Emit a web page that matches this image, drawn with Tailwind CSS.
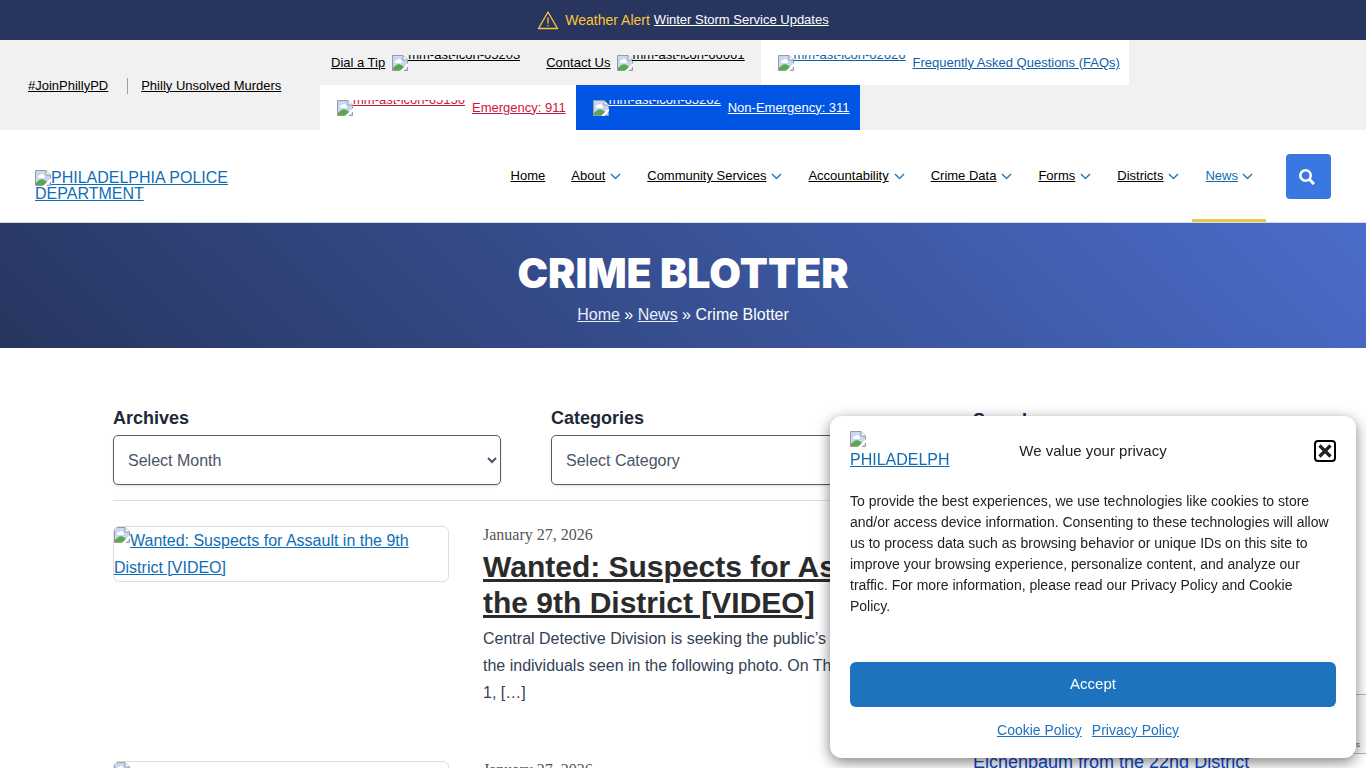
<!DOCTYPE html>
<html lang="en">
<head>
  <meta charset="UTF-8">
  <meta name="viewport" content="width=device-width, initial-scale=1.0">
  <title>Crime Blotter | Philadelphia Police Department</title>
  <script src="https://cdn.jsdelivr.net/npm/@tailwindcss/browser@4"></script>
</head>
<body class="bg-white h-screen overflow-hidden font-['Liberation_Sans',Arial,sans-serif] text-base text-[#334155]">

  <!-- Shared icons -->
  <svg class="hidden">
    <symbol id="missing" viewBox="0 0 16 16">
      <path d="M.5 .5H11L15.500 5V15.500H.5Z" fill="#c6d8f4"/>
      <path d="M3 7.500a2 2 0 0 1 2-2.500 2.500 2.500 0 0 1 4.500 1 1.500 1.500 0 0 1 0 2H4Z" fill="#fff"/>
      <path d="M1 15.500V13Q5 8 8.500 9.500T13 13V15.500Z" fill="#5aa84b"/>
      <path d="M8 16 16 8V11L11.500 16Z" fill="#fff"/>
      <path d="M7.500 15.500H.5V.5H11L15.500 5V8.500M12 15.500H15.500V12" fill="none" stroke="#9a9a9f"/>
      <path d="M11 .5V5H15.500" fill="#fff" stroke="#9a9a9f"/>
    </symbol>
    <symbol id="chevron" viewBox="0 0 11 7">
      <path d="M1 1 5.500 5.500 10 1" fill="none" stroke="currentColor" stroke-width="1.500"/>
    </symbol>
  </svg>

  <!-- Weather alert -->
  <div class="bg-[#27355f] h-10 flex items-center justify-center text-sm">
    <svg class="w-[22px] h-5 mr-1.5" viewBox="0 0 22 20" fill="none" stroke="#fcc63a" stroke-width="1.300" stroke-linejoin="round" stroke-linecap="round">
      <path d="M11 2 20.500 18.500H1.500Z"/>
      <path d="M11 8V13M11 15.300V15.800"/>
    </svg>
    <span class="text-[#fcc63a] mr-1">Weather Alert</span>
    <a href="#" class="text-white text-[13px] underline">Winter Storm Service Updates</a>
  </div>

  <!-- Top bar -->
  <div class="bg-[#f1f1f1] flex items-center text-[13px] text-black">
    <div class="w-80 shrink-0 flex items-center pl-7 pt-px">
      <a href="#" class="underline">#JoinPhillyPD</a>
      <span class="w-px h-4 bg-gray-400 ml-[19px] mr-[13px]"></span>
      <a href="#" class="underline">Philly Unsolved Murders</a>
    </div>
    <div class="w-[860px] flex flex-wrap">
      <a href="#" class="h-[45px] pl-[11px] pr-4 flex items-center gap-[7px] underline">Dial a Tip
        <span class="w-32 h-4 flex items-start overflow-hidden leading-0 whitespace-nowrap"><svg class="size-4 shrink-0"><use href="#missing"/></svg><span class="underline">mm-ast-icon-65203</span></span>
      </a>
      <a href="#" class="h-[45px] pl-2.5 pr-4 flex items-center gap-1.5 underline">Contact Us
        <span class="w-32 h-4 flex items-start overflow-hidden leading-0 whitespace-nowrap"><svg class="size-4 shrink-0"><use href="#missing"/></svg><span class="underline">mm-ast-icon-66661</span></span>
      </a>
      <a href="#" class="h-[45px] pl-[17px] pr-[9px] mr-12 flex items-center gap-[7px] underline bg-white text-[#0f5fa8]">
        <span class="w-32 h-4 flex items-start overflow-hidden leading-0 whitespace-nowrap"><svg class="size-4 shrink-0"><use href="#missing"/></svg><span class="underline">mm-ast-icon-62626</span></span>
        Frequently Asked Questions (FAQs)
      </a>
      <a href="#" class="h-[45px] pl-[17px] pr-2.5 flex items-center gap-[7px] underline bg-white text-[#c8193c]">
        <span class="w-32 h-4 flex items-start overflow-hidden leading-0 whitespace-nowrap"><svg class="size-4 shrink-0"><use href="#missing"/></svg><span class="underline">mm-ast-icon-65156</span></span>
        Emergency: 911
      </a>
      <a href="#" class="h-[45px] pl-[17px] pr-2.5 flex items-center gap-[7px] underline bg-[#0055e5] text-white">
        <span class="w-32 h-4 flex items-start overflow-hidden leading-0 whitespace-nowrap"><svg class="size-4 shrink-0"><use href="#missing"/></svg><span class="underline">mm-ast-icon-65262</span></span>
        Non-Emergency: 311
      </a>
    </div>
  </div>

  <!-- Main header -->
  <header class="h-[93px] border-b border-[#d5dbea] px-[35px] flex items-center justify-between">
    <a href="#" class="w-[200px] mt-[19px] leading-4 text-[#0f6db5] underline"><svg class="size-4 inline-block align-bottom"><use href="#missing"/></svg>PHILADELPHIA POLICE DEPARTMENT</a>
    <div class="h-full flex items-center">
      <nav class="h-full flex text-[13px] text-black whitespace-nowrap">
        <a href="#" class="px-[13px] flex items-center"><span class="underline">Home</span></a>
        <a href="#" class="px-[13px] flex items-center gap-[5px]"><span class="underline">About</span><svg class="w-[11px] h-[7px] text-[#2b7fb0]"><use href="#chevron"/></svg></a>
        <a href="#" class="px-[13px] flex items-center gap-[5px]"><span class="underline">Community Services</span><svg class="w-[11px] h-[7px] text-[#2b7fb0]"><use href="#chevron"/></svg></a>
        <a href="#" class="px-[13px] flex items-center gap-[5px]"><span class="underline">Accountability</span><svg class="w-[11px] h-[7px] text-[#2b7fb0]"><use href="#chevron"/></svg></a>
        <a href="#" class="px-[13px] flex items-center gap-[5px]"><span class="underline">Crime Data</span><svg class="w-[11px] h-[7px] text-[#2b7fb0]"><use href="#chevron"/></svg></a>
        <a href="#" class="px-[13px] flex items-center gap-[5px]"><span class="underline">Forms</span><svg class="w-[11px] h-[7px] text-[#2b7fb0]"><use href="#chevron"/></svg></a>
        <a href="#" class="px-[13px] flex items-center gap-[5px]"><span class="underline">Districts</span><svg class="w-[11px] h-[7px] text-[#2b7fb0]"><use href="#chevron"/></svg></a>
        <a href="#" class="px-[13px] flex items-center gap-1 text-[#0f6db5] border-y-3 border-t-transparent border-b-[#eac947]"><span class="underline">News</span><svg class="w-[11px] h-[7px] text-[#2b7fb0]"><use href="#chevron"/></svg></a>
      </nav>
      <button aria-label="Search" class="ml-5 size-[45px] rounded bg-[#3878e0] flex items-center justify-center">
        <svg class="size-4 mr-[3px] mt-0.5" viewBox="0 0 16 16" fill="none" stroke="#fff">
          <circle cx="6.500" cy="6.500" r="5.200" stroke-width="2.600"/>
          <path d="M10.300 10.300 15 15" stroke-width="3"/>
        </svg>
      </button>
    </div>
  </header>

  <!-- Page banner -->
  <section class="h-[125px] pt-[25px] bg-linear-45 from-[#27355f] to-[#4a6dcb] text-white text-center">
    <h1 class="font-[Inter,'Arial_Black',sans-serif] [font-variation-settings:'opsz'_14] font-black text-[41px] leading-[50px]">CRIME BLOTTER</h1>
    <p class="mt-[5px] leading-6"><a href="#" class="underline text-[#e8eefc]">Home</a> » <a href="#" class="underline text-[#e8eefc]">News</a> » Crime Blotter</p>
  </section>

  <div class="max-w-[1140px] mx-auto pt-[58px] flex gap-5">
    <main class="w-[840px] shrink-0">
      <div class="mr-[14px] grid grid-cols-2 gap-[50px] pb-[15px] border-b border-[#dddddd]">
        <div>
          <label for="archives" class="block text-lg leading-6 font-bold text-[#1e293b]">Archives</label>
          <select id="archives" class="mt-[5px] w-full h-[50px] px-2.5 border border-[#5b5b66] rounded-[5px] bg-white text-[#475569] shadow-sm">
            <option>Select Month</option>
          </select>
        </div>
        <div>
          <label for="categories" class="block text-lg leading-6 font-bold text-[#1e293b]">Categories</label>
          <select id="categories" class="mt-[5px] w-full h-[50px] px-2.5 border border-[#5b5b66] rounded-[5px] bg-white text-[#475569] shadow-sm">
            <option>Select Category</option>
          </select>
        </div>
      </div>

      <article class="mt-[25px] h-[235px] flex items-start gap-[34px]">
        <a href="#" class="w-[336px] shrink-0 border border-[#dddddd] rounded-md overflow-hidden leading-[27px] text-[#0f6db5] underline"><svg class="size-4 inline-block align-top"><use href="#missing"/></svg>Wanted: Suspects for Assault in the 9th District [VIDEO]</a>
        <div class="flex-1">
          <p class="font-['Liberation_Serif',serif] leading-[18px] text-[#555555]">January 27, 2026</p>
          <h2 class="mt-[5px] text-3xl leading-9 font-bold text-[#2b2b2b]"><a href="#" class="underline">Wanted: Suspects for Assault in the 9th District [VIDEO]</a></h2>
          <p class="mt-1 leading-[27px]">Central Detective Division is seeking the public’s help identifying the individuals seen in the following photo. On Thursday, January 1, […]</p>
        </div>
      </article>

      <article class="flex items-start gap-[34px]">
        <a href="#" class="w-[336px] shrink-0 border border-[#dddddd] rounded-md overflow-hidden leading-[27px] text-[#0f6db5] underline"><svg class="size-4 inline-block align-top"><use href="#missing"/></svg></a>
        <div class="flex-1">
          <p class="font-['Liberation_Serif',serif] leading-[18px] text-[#555555]">January 27, 2026</p>
        </div>
      </article>
    </main>

    <aside class="flex-1 pt-0.5 text-lg">
      <h2 class="leading-6 font-bold text-[#1e293b]">Search</h2>
      <a href="#" class="mt-[318px] block leading-6 whitespace-nowrap text-[#0a48d0]">Eichenbaum from the 22nd District</a>
    </aside>
  </div>

  <!-- Captcha badge -->
  <div class="fixed right-0 bottom-[14px] w-[70px] h-[60px] bg-[#f9f9f9] border border-r-0 border-[#b8b8b8] flex items-end justify-end pr-1.5 pb-0.5 text-[8px] text-[#555555]">Terms</div>

  <!-- Cookie notice -->
  <div role="dialog" aria-label="We value your privacy" class="fixed right-2.5 bottom-2.5 w-[526px] max-w-full px-5 pt-[15px] pb-4 bg-white rounded-xl shadow-[0_4px_14px_rgba(0,0,0,0.5)] text-[#222222]">
    <div class="grid grid-cols-[100px_1fr_100px] items-center">
      <a href="#" class="h-10 overflow-hidden text-[#0f6db5] underline"><svg class="size-4 block"><use href="#missing"/></svg><span class="block leading-[25px]">PHILADELPH</span></a>
      <p class="text-center text-[15px]">We value your privacy</p>
      <button aria-label="Close" class="justify-self-end size-[22px] border-2 border-black rounded flex items-center justify-center">
        <svg class="size-3.5" viewBox="0 0 14 14" stroke="#222" stroke-width="3.200"><path d="M1.500 1.500 12.500 12.500M12.500 1.500 1.500 12.500"/></svg>
      </button>
    </div>
    <p class="mt-5 text-sm leading-[21px]">To provide the best experiences, we use technologies like cookies to store and/or access device information. Consenting to these technologies will allow us to process data such as browsing behavior or unique IDs on this site to improve your browsing experience, personalize content, and analyze our traffic. For more information, please read our Privacy Policy and Cookie Policy.</p>
    <button class="mt-[45px] w-full h-[45px] rounded-md bg-[#1e73be] text-white text-[15px]">Accept</button>
    <div class="mt-[11px] flex justify-center gap-2.5 text-sm leading-6 text-[#1e73be] pr-2.5">
      <a href="#" class="underline">Cookie Policy</a>
      <a href="#" class="underline">Privacy Policy</a>
    </div>
  </div>

</body>
</html>
